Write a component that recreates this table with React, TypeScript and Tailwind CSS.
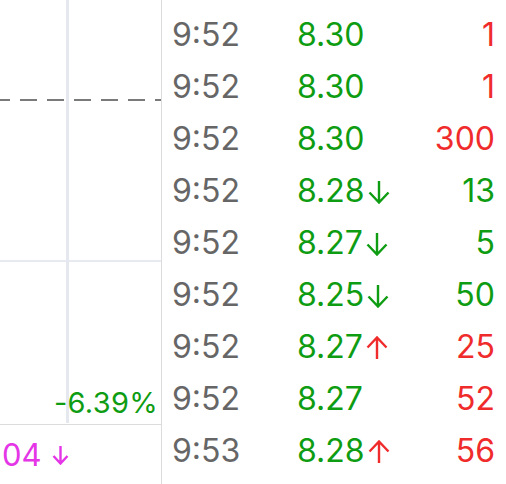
interface Tick {
    time: string;
    price: string;
    move?: 'up' | 'down';
    volume: string;
    side: 'buy' | 'sell';
}

const ticks: Tick[] = [
    { time: '9:52', price: '8.30', volume: '1', side: 'buy' },
    { time: '9:52', price: '8.30', volume: '1', side: 'buy' },
    { time: '9:52', price: '8.30', volume: '300', side: 'buy' },
    { time: '9:52', price: '8.28', move: 'down', volume: '13', side: 'sell' },
    { time: '9:52', price: '8.27', move: 'down', volume: '5', side: 'sell' },
    { time: '9:52', price: '8.25', move: 'down', volume: '50', side: 'sell' },
    { time: '9:52', price: '8.27', move: 'up', volume: '25', side: 'buy' },
    { time: '9:52', price: '8.27', volume: '52', side: 'buy' },
    { time: '9:53', price: '8.28', move: 'up', volume: '56', side: 'buy' },
]

// thin arrow glyph, same shape as the app's ↑ / ↓
function Arrow({ dir, w, h, className }: { dir: 'up' | 'down'; w: number; h: number; className?: string }) {
    const d = dir === 'down'
        ? `M${w / 2} 1 V${h - 1.5} M1.5 ${h - w / 2 - 0.5} L${w / 2} ${h - 1.5} L${w - 1.5} ${h - w / 2 - 0.5}`
        : `M${w / 2} ${h - 1} V1.5 M1.5 ${w / 2 + 0.5} L${w / 2} 1.5 L${w - 1.5} ${w / 2 + 0.5}`
    return (
        <svg width={w} height={h} viewBox={`0 0 ${w} ${h}`} className={className} fill="none" stroke="currentColor" strokeWidth="2.4" strokeLinecap="butt" strokeLinejoin="miter">
            <path d={d} />
        </svg>
    )
}

export default function App() {
    return (
        <div className="w-[506px] h-[484px] overflow-hidden bg-white flex" style={{ fontFamily: 'Inter, "Noto Sans CJK SC", sans-serif' }}>
            {/* chart side */}
            <div className="relative w-[162px] shrink-0 border-r border-[#dcdcdc] flex flex-col">
                <div className="h-[262px] border-b-2 border-[#e8eaf1]">
                    <svg width="161" height="260" className="block">
                        <line x1="0" y1="100" x2="161" y2="100" stroke="#7a7a7a" strokeWidth="2" strokeDasharray="17 10" strokeDashoffset="7" />
                    </svg>
                </div>
                <div className="h-[163px] border-b border-[#dcdcdc] flex items-end justify-end pr-[3px] pb-[7px]">
                    <span className="relative z-10 text-[29px] leading-none tracking-[0.3px] text-[#0e9c12]">-6.39%</span>
                </div>
                <div className="flex-1 flex items-center pl-[2px] text-[31px] leading-none text-[#e436e6]">
                    <span>04</span>
                    <Arrow dir="down" w={17} h={20} className="ml-[10px]" />
                </div>
                <div className="absolute left-[66px] top-0 w-[3px] h-[423px] bg-[#e6e8f0]" />
            </div>

            {/* tick list */}
            <div className="flex-1 flex flex-col">
                <div className="h-[9px] -mt-[16px] flex items-end text-[20px] leading-none text-[#777]">
                    <span className="ml-[101px]">价格</span>
                    <span className="ml-[14px]">成交量</span>
                    <span className="ml-[2px]">↓</span>
                </div>
                <div className="h-[16px]" />
                {ticks.map((t, i) => (
                    <div key={i} className="h-[52px] flex items-center text-[32px] leading-[52px]">
                        <span className="w-[135px] pl-[10px] text-[#666]">{t.time}</span>
                        <span className="flex items-center text-[#0e9c12]">
                            {t.price}
                            {t.move && (
                                <Arrow
                                    dir={t.move}
                                    w={22}
                                    h={24}
                                    className={`ml-[3px] mt-[1px] ${t.move === 'up' ? 'text-[#f02b2b]' : 'text-[#0e9c12]'}`}
                                />
                            )}
                        </span>
                        <span className={`ml-auto pr-[11px] ${t.side === 'buy' ? 'text-[#f02b2b]' : 'text-[#0e9c12]'}`}>{t.volume}</span>
                    </div>
                ))}
            </div>
        </div>
    )
}
